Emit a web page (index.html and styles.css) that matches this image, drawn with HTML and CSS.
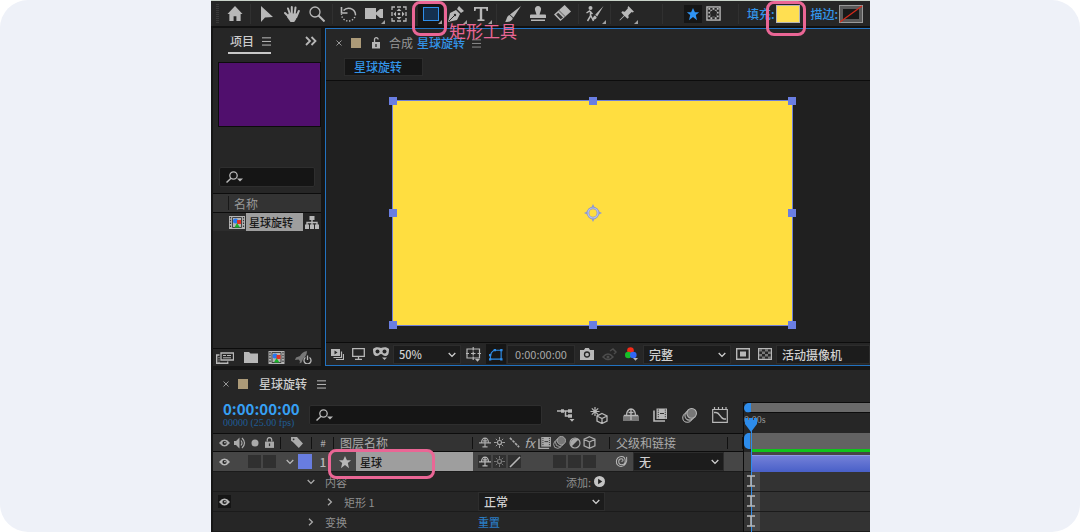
FILE: index.html
```html
<!DOCTYPE html>
<html lang="zh-CN">
<head>
    <meta charset="utf-8">
    <title>星球旋转</title>
    <link rel="stylesheet" href="styles.css">
</head>
<body>
    <svg class="sprite" aria-hidden="true">
        <symbol id="home" viewBox="0 0 16 16"><path d="M8 0 0 8.500h2V16h4.500v-5h3v5H14V8.500h2z" fill="currentColor"/></symbol>
        <symbol id="arrow" viewBox="0 0 12 16"><path d="M0 0v16l4-4.500 8-.5z" fill="currentColor"/></symbol>
        <symbol id="hand" viewBox="0 0 16 16"><path d="M1 7l4 4M4 2.500 6.300 9M7.800 1v8M11.500 1.500l-1 7.500M14.800 5l-2.500 6" stroke="currentColor" stroke-width="2" stroke-linecap="round" fill="none"/><path d="M4.500 7.500h8.700l-1 5.500-2 3H6.500L3 11z" fill="currentColor"/></symbol>
        <symbol id="zoom" viewBox="0 0 16 16"><circle cx="6" cy="6" r="5" fill="none" stroke="currentColor" stroke-width="1.300"/><path d="m9.500 9.500 6 6" stroke="currentColor" stroke-width="2"/></symbol>
        <symbol id="rotate" viewBox="0 0 16 16"><path d="M3 4.500A7 7 0 0 1 15 8" fill="none" stroke="currentColor" stroke-width="1.500"/><path d="M15 8A7 7 0 1 1 1 8" fill="none" stroke="currentColor" stroke-width="1.400" stroke-dasharray="1.400 1.600"/><path d="M1 1v6h6" fill="none" stroke="currentColor" stroke-width="1.600"/></symbol>
        <symbol id="camera" viewBox="0 0 18 16"><path d="M0 2h11v11H0zM11 6.500 15 3h3v9h-3l-4-3.500z" fill="currentColor"/></symbol>
        <symbol id="anchor" viewBox="0 0 16 16"><path d="M1 4V1h3M6 1h4M12 1h3v3M15 6v4M15 12v3h-3M10 15H6M4 15H1v-3M1 10V6" fill="none" stroke="currentColor" stroke-width="1.300"/><path d="M8 2.500 10.500 5h-5zM8 13.500 5.500 11h5zM2.500 8 5 5.500v5zM13.500 8 11 10.500v-5z" fill="currentColor"/><circle cx="8" cy="8" r="1.300" fill="currentColor"/></symbol>
        <symbol id="pen" viewBox="0 0 16 16"><path d="M0 16 2 7l6-3 4 4-3 6zM9 3l2-3 5 5-3 2z" fill="currentColor"/><path d="m1 15 5-5" stroke="#262626"/><circle cx="7" cy="9" r="1.200" fill="#262626"/></symbol>
        <symbol id="type" viewBox="0 0 16 16"><path d="M1 1h14v4h-1.500L13 2.800H9.200v10.400l2.300.4V15h-7v-1.400l2.300-.4V2.800H3L2.500 5H1z" fill="currentColor"/></symbol>
        <symbol id="brush" viewBox="0 0 16 16"><path d="M16 0 8.500 11.500 5 8.500zM4.500 9 7.800 12c-.3 3-3.800 4.300-7.800 3.800C2 14 1.500 10 4.500 9z" fill="currentColor"/></symbol>
        <symbol id="stamp" viewBox="0 0 16 16"><path d="M8 0a3.200 3.200 0 0 1 3 4L9.500 8.500H15a1 1 0 0 1 1 1V12H0V9.500a1 1 0 0 1 1-1h5.500L5 4a3.200 3.200 0 0 1 3-4zM1 13.500h14V15H1z" fill="currentColor"/></symbol>
        <symbol id="eraser" viewBox="0 0 16 16"><path d="M10 0 0 9l6 6L16 6z" fill="currentColor"/><path d="m4.500 5 6 6" stroke="#777" stroke-width="1"/><path d="M2 9 4 7.200l4.500 4.500L6.300 13.500z" fill="#333"/></symbol>
        <symbol id="roto" viewBox="0 0 18 16"><circle cx="5" cy="2" r="2" fill="currentColor"/><path d="M1 7l3-2 3 3M5 5v5l-3 5M5 9l3 6" fill="none" stroke="currentColor" stroke-width="1.500"/><path d="m18 0-6.300 10.500-2-1.800zM9.500 9.500l1.700 1.700C11 13 9 14 6.500 14c1-1 1-4 3-4.500z" fill="currentColor"/></symbol>
        <symbol id="pin" viewBox="0 0 16 16"><path d="m10 0 6 6-1.500.8-1-.3-3.500 3.300.3 2.700-1.300 1L6 10.700 1 15.500l-.5-.5L5.300 10 2.500 7l1-1.300 2.700.3L9.500 2.500 9.200 1.500z" fill="currentColor"/></symbol>
        <symbol id="star" viewBox="0 0 16 16"><path d="m8 1 2.200 5H15l-3.800 3.200L12.600 15 8 11.500 3.400 15l1.400-5.800L1 6h4.800z" fill="currentColor"/></symbol>
        <symbol id="checker" viewBox="0 0 16 16"><rect x="1" y="1" width="14" height="14" fill="none" stroke="currentColor" stroke-width="1.500"/><path d="M3.500 2v12M8 2v12M12.500 2v12" stroke="currentColor" stroke-width="2" stroke-dasharray="2 2"/><path d="M5.700 4v10M10.300 4v10" stroke="currentColor" stroke-width="2" stroke-dasharray="2 2"/><circle cx="8" cy="8" r="3.400" fill="#262626"/></symbol>
        <symbol id="menu" viewBox="0 0 10 10"><path d="M0 1.500h10M0 5.500h10M0 9.500h10" stroke="currentColor"/></symbol>
        <symbol id="more" viewBox="0 0 12 10"><path d="m1 1 4 4-4 4M6.500 1l4 4-4 4" fill="none" stroke="currentColor" stroke-width="1.800"/></symbol>
        <symbol id="close" viewBox="0 0 6 6"><path d="m.5.5 5 5m0-5-5 5" stroke="currentColor"/></symbol>
        <symbol id="unlock" viewBox="0 0 10 12"><path d="M1 5h8v6.500H1z" fill="currentColor"/><path d="M3.500 5V2.500a1.800 1.800 0 0 1 3.600 0" fill="none" stroke="currentColor" stroke-width="1.300"/><path d="M5 7v3" stroke="#262626" stroke-width="1.300"/></symbol>
        <symbol id="lock" viewBox="0 0 10 12"><path d="M0 5h10v7H0z" fill="currentColor"/><path d="M2.500 5V3a2.500 2.500 0 0 1 5 0v2" fill="none" stroke="currentColor" stroke-width="1.400"/><path d="M5 7v3" stroke="#333" stroke-width="1.400"/></symbol>
        <symbol id="search" viewBox="0 0 18 12"><circle cx="7.500" cy="4.500" r="3.700" fill="none" stroke="currentColor" stroke-width="1.300"/><path d="m5 7.200-4.500 4.300" stroke="currentColor" stroke-width="1.500"/><path d="M11 7.500h6l-3 3z" fill="currentColor"/></symbol>
        <symbol id="comp" viewBox="0 0 16 13"><path d="M0 0h16v13H0z" fill="#b4b4b4"/><path d="M1.500 1v11M14.500 1v11" stroke="#333" stroke-width="1.200" stroke-dasharray="1.500 1.300"/><path d="M3.500 1.500v10h9v-10z" fill="none" stroke="#444"/><circle cx="6.500" cy="5" r="2.500" fill="#2878f0"/><path d="M8 4h4v4H8z" fill="#e33222"/><path d="m8 7 3 4.500H5.500z" fill="#19b32b"/></symbol>
        <symbol id="net" viewBox="0 0 14 13"><path d="M4.500 0h5v4h-5zM0 8.500h4V13H0zM5 8.500h4V13H5zM10 8.500h4V13h-4z" fill="currentColor"/><path d="M7 4v5M2 9V6.500h10V9" fill="none" stroke="currentColor" stroke-width="1.400"/></symbol>
        <symbol id="interpret" viewBox="0 0 18 12"><path d="M5 1h12.500v7H5z" fill="none" stroke="currentColor" stroke-width="1.300"/><path d="M7 3.500h3M7 5.800h8M11 3.500h4" stroke="currentColor"/><path d="M3.500 3H.7v8.300h11V9.500" fill="none" stroke="currentColor" stroke-width="1.400"/><path d="M3 5v6" stroke="currentColor" stroke-dasharray="1.300 1"/></symbol>
        <symbol id="folder" viewBox="0 0 14 11"><path d="M0 0h5l1.500 1.500H14V11H0z" fill="currentColor"/></symbol>
        <symbol id="rocket" viewBox="0 0 17 13"><path d="M12 0C8 .5 6 3 5 5L1 6.500 0 9l3.500-.5L5 10l-.5 2.500 2-1L8 8c2-2 4-4 4-8z" fill="#777"/><path d="M10.500 6.500a3.500 3.500 0 1 0 4 0M12.500 4.500V9" fill="none" stroke="currentColor" stroke-width="1.300"/></symbol>
        <symbol id="preview" viewBox="0 0 13 11"><path d="M0 0h9v7H0z" fill="currentColor"/><path d="M2.500 8.500h8V2.500M5 10.500h7.500V5" fill="none" stroke="currentColor" stroke-width="1.200"/><path d="M3.500 1.500v4l3-2z" fill="#262626"/></symbol>
        <symbol id="monitor" viewBox="0 0 13 12"><path d="M.7.7h11.600v7.600H.7zM6.500 8v3M3 11.300h7" fill="none" stroke="currentColor" stroke-width="1.300"/></symbol>
        <symbol id="mask" viewBox="0 0 16 14"><path d="M0 2C2-.5 6 0 8 1c2-1 6-1.500 8 1 0 5-1 7-3.500 7C10 9 9.500 7 8 7S6 9 3.500 9C1 9 0 7 0 2z" fill="currentColor"/><circle cx="4.500" cy="4.500" r="2" fill="#262626"/><circle cx="11.500" cy="4.500" r="2" fill="#262626"/><path d="M9 10.500h5L11.500 13z" fill="currentColor"/></symbol>
        <symbol id="guides" viewBox="0 0 15 15"><path d="M1 2h12.500v9H1zM7.200 0v3.500M7.200 9.500V13M-1 6.500h4M11.500 6.500h4M5 6.500h4.500M7.200 4.500v4" fill="none" stroke="currentColor" stroke-width="1.200"/><path d="M9 12h5l-2.500 2.700z" fill="currentColor"/></symbol>
        <symbol id="path" viewBox="0 0 15 13"><path d="M1.500 11.500V7.500Q3 2 7 2h6v9.500z" fill="none" stroke="currentColor" stroke-width="1.200"/><path d="M0 10.500h2.500V13H0zM0 6h2.500v2.500H0zM12 .5h2.500V3H12zM12 10.500h2.500V13H12zM5 .5h2.500V3H5z" fill="currentColor"/></symbol>
        <symbol id="snap" viewBox="0 0 14 12"><path d="M0 2h4l1.200-2h3.600L10 2h4v10H0z" fill="currentColor"/><circle cx="7" cy="6.500" r="2.500" fill="none" stroke="#262626" stroke-width="1.300"/></symbol>
        <symbol id="ghost" viewBox="0 0 15 13"><path d="M1 9q5-6 10 0-5 5-10 0zM8 3l3-2 3 3-2 2" fill="none" stroke="currentColor" stroke-width="1.500"/><circle cx="6" cy="9" r="1.500" fill="currentColor"/></symbol>
        <symbol id="rgb" viewBox="0 0 14 14"><circle cx="5.500" cy="3.500" r="3.300" fill="#f52a18"/><circle cx="3.300" cy="8" r="3.300" fill="#17bd28"/><circle cx="8.300" cy="8" r="3.300" fill="#3267f5"/><path d="M8 11h5l-2.500 2.700z" fill="currentColor"/></symbol>
        <symbol id="roi" viewBox="0 0 14 12"><path d="M.7.7h12.600v10.600H.7z" fill="none" stroke="currentColor" stroke-width="1.400"/><path d="M4 3.500h6v5H4z" fill="currentColor"/></symbol>
        <symbol id="grid" viewBox="0 0 14 12"><path d="M.6.6h12.800v10.800H.6z" fill="none" stroke="currentColor" stroke-width="1.200"/><path d="M1 1h3v2.500H1zM7 1h3v2.500H7zM4 3.500h3V6H4zM10 3.500h3V6h-3zM1 6h3v2.500H1zM7 6h3v2.500H7zM4 8.500h3V11H4zM10 8.500h3V11h-3z" fill="#777"/></symbol>
        <symbol id="down" viewBox="0 0 8 6"><path d="m.7 1 3.300 3.400L7.300 1" fill="none" stroke="currentColor" stroke-width="1.300"/></symbol>
        <symbol id="right" viewBox="0 0 6 8"><path d="m1 .7 3.400 3.300L1 7.300" fill="none" stroke="currentColor" stroke-width="1.300"/></symbol>
        <symbol id="flow" viewBox="0 0 18 14"><path d="M0 3h6M6 3h5M8.500 3v5H12" fill="none" stroke="currentColor" stroke-width="1.500"/><path d="M4 1.300h3v3.400H4zM11 1.300h4v3.400h-4zM11 6.300h4v3.400h-4zM12.500 11h5L15 13.700z" fill="currentColor"/></symbol>
        <symbol id="draft" viewBox="0 0 18 17"><path d="M5 0v9M.5 4.500h9M1.800 1.300l6.400 6.400M8.200 1.300 1.800 7.700" stroke="currentColor" stroke-width="1.200"/><path d="m12 6.500 5 2.500v5l-5 2.500L7 14V9zM7 9l5 2.500L17 9M12 11.500v5" fill="none" stroke="currentColor" stroke-width="1.300"/></symbol>
        <symbol id="shybar" viewBox="0 0 16 14"><path d="M0 7.500h16V13H0z" fill="#777"/><path d="M3.500 7a4.500 6 0 0 1 9 0M8 1v11M1 7.500h14M5.500 4.500h5" fill="none" stroke="currentColor" stroke-width="1.400"/></symbol>
        <symbol id="shy" viewBox="0 0 14 12"><path d="M3 6a4 5 0 0 1 8 0M7 1v10M0 6.500h14M4 11h6M4.500 4h5" fill="none" stroke="currentColor" stroke-width="1.400"/></symbol>
        <symbol id="film" viewBox="0 0 14 13"><path d="M3.500 0H14v10.500H3.500z" fill="currentColor"/><path d="M1 2v10.500h11" fill="none" stroke="currentColor" stroke-width="1.600"/><path d="M5.300 1v9M12.300 1v9" stroke="#333" stroke-dasharray="1.200 1"/><path d="M7 5h4" stroke="#333"/></symbol>
        <symbol id="blur" viewBox="0 0 14 14"><circle cx="5" cy="9" r="4.300" fill="none" stroke="currentColor"/><circle cx="7" cy="7" r="4.300" fill="#333" stroke="currentColor"/><circle cx="9" cy="5" r="4.500" fill="#777" stroke="currentColor"/></symbol>
        <symbol id="graph" viewBox="0 0 16 16"><path d="M.7 2.500h14.600v12.800H.7zM2.500 0v3M6.500 0v3M10.500 0v3M14 0v3" fill="none" stroke="currentColor" stroke-width="1.200"/><path d="M2 5.500h2c4 0 4 6 8 6.500h2" fill="none" stroke="currentColor" stroke-width="1.400"/></symbol>
        <symbol id="eye" viewBox="0 0 12 8"><path d="M0 4q6-7.500 12 0-6 7.500-12 0z" fill="currentColor"/><circle cx="6" cy="4" r="2.300" fill="#222"/><circle cx="6.500" cy="3.500" r="1" fill="currentColor"/></symbol>
        <symbol id="sound" viewBox="0 0 12 12"><path d="M0 4h2l3.500-3.500v11L2 8H0z" fill="currentColor"/><path d="M7 3.500q2 2.500 0 5M8 1q5 5 0 10" fill="none" stroke="currentColor" stroke-width="1.200"/></symbol>
        <symbol id="dot" viewBox="0 0 8 8"><circle cx="4" cy="4" r="3.500" fill="currentColor"/></symbol>
        <symbol id="tag" viewBox="0 0 13 12"><path d="M0 0h6.500L13 7l-4.500 5L2 5.500 0 4z" fill="currentColor"/><circle cx="2.800" cy="2.500" r="1" fill="#333"/></symbol>
        <symbol id="sun" viewBox="0 0 12 12"><circle cx="6" cy="6" r="2.200" fill="none" stroke="currentColor" stroke-width="1.200"/><path d="M6 0v3M6 9v3M0 6h3M9 6h3M2 2l1.700 1.700M8.300 8.300 10 10M10 2 8.300 3.700M2 10l1.700-1.700" stroke="currentColor"/></symbol>
        <symbol id="jag" viewBox="0 0 12 12"><path d="m1 1 10 10" stroke="currentColor" stroke-width="1.800" stroke-dasharray="3 1"/></symbol>
        <symbol id="slash" viewBox="0 0 12 12"><path d="M1 11 11 1" stroke="currentColor" stroke-width="1.600"/></symbol>
        <symbol id="half" viewBox="0 0 12 12"><circle cx="6" cy="6" r="5" fill="none" stroke="currentColor" stroke-width="1.200"/><path d="M9.500 2.500a5 5 0 0 0-7 7z" fill="currentColor"/></symbol>
        <symbol id="cube" viewBox="0 0 12 12"><path d="m6 .7 5 2.300v6L6 11.300 1 9V3zM1 3l5 2.500L11 3M6 5.500v6" fill="none" stroke="currentColor" stroke-width="1.200"/></symbol>
        <symbol id="whip" viewBox="0 0 14 14"><path d="M12.500 2c1 6-2 10.500-6 10.500a5.200 5.200 0 0 1-5-5.500C1.500 4 4 1.500 7 1.500S11 4 11 6.500 9 10.500 7 10.500 4 9 4 7s1-3 3-3 2.500 2.500 0 3" fill="none" stroke="currentColor" stroke-width="1.100"/></symbol>
        <symbol id="play" viewBox="0 0 12 12"><circle cx="6" cy="6" r="6" fill="#c4c4c4"/><path d="M4.500 3v6L9 6z" fill="#222"/></symbol>
        <symbol id="target" viewBox="0 0 18 18"><path d="m9 0 2 4H7zM18 9l-4 2V7zM9 18l-2-4h4zM0 9l4-2v4z" fill="#8f9bd0"/><circle cx="9" cy="9" r="5" fill="none" stroke="#8f95b8" stroke-width="2.600"/><circle cx="9" cy="9" r="5" fill="none" stroke="#b4c0f4" stroke-width="1.200"/></symbol>
        <symbol id="ibeam" viewBox="0 0 8 12"><path d="M0 1h8M4 1v10M0 11h8" stroke="currentColor" stroke-width="1.600"/></symbol>
        <symbol id="head" viewBox="0 0 12 14"><path d="M0 0h3v2h1V0h4v2h1V0h3v6l-6 8-6-8z" fill="#2d8ceb"/></symbol>
    </svg>

    <div class="frame">
        <div class="app">
            <div class="toolbar">
                <span class="grip"></span>
                <div class="tools">
                    <button class="tool" aria-label="主页"><svg width="16" height="15"><use href="#home"/></svg></button>
                </div>
                <span class="sep"></span>
                <div class="tools">
                    <button class="tool" aria-label="选取"><svg width="12" height="16"><use href="#arrow"/></svg></button>
                    <button class="tool" aria-label="手形"><svg width="16" height="16"><use href="#hand"/></svg></button>
                    <button class="tool" aria-label="缩放"><svg width="16" height="16"><use href="#zoom"/></svg></button>
                </div>
                <span class="sep"></span>
                <div class="tools">
                    <button class="tool" aria-label="旋转"><svg width="17" height="16"><use href="#rotate"/></svg></button>
                    <button class="tool nested" aria-label="摄像机"><svg width="18" height="16"><use href="#camera"/></svg></button>
                    <button class="tool" aria-label="锚点"><svg width="16" height="16"><use href="#anchor"/></svg></button>
                </div>
                <span class="sep blank"></span>
                <div class="tools">
                    <div class="marked">
                        <button class="tool active nested" aria-label="矩形工具"><span class="rect"></span></button>
                        <span class="mark mark-tool"></span>
                        <span class="mark-text">矩形工具</span>
                    </div>
                    <button class="tool nested" aria-label="钢笔"><svg width="16" height="16"><use href="#pen"/></svg></button>
                    <button class="tool nested" aria-label="文字"><svg width="16" height="16"><use href="#type"/></svg></button>
                </div>
                <span class="sep"></span>
                <div class="tools">
                    <button class="tool" aria-label="画笔"><svg width="16" height="16"><use href="#brush"/></svg></button>
                    <button class="tool" aria-label="仿制图章"><svg width="16" height="16"><use href="#stamp"/></svg></button>
                    <button class="tool" aria-label="橡皮擦"><svg width="17" height="17"><use href="#eraser"/></svg></button>
                </div>
                <span class="sep"></span>
                <div class="tools">
                    <button class="tool nested" aria-label="Roto 笔刷"><svg width="19" height="16"><use href="#roto"/></svg></button>
                </div>
                <span class="sep"></span>
                <div class="tools">
                    <button class="tool nested" aria-label="操控点"><svg width="15" height="15"><use href="#pin"/></svg></button>
                </div>
                <span class="sep wide"></span>
                <div class="tools options">
                    <button class="small-tool on" aria-label="形状"><svg width="14" height="14"><use href="#star"/></svg></button>
                    <button class="small-tool" aria-label="蒙版"><svg width="15" height="15"><use href="#checker"/></svg></button>
                </div>
                <span class="sep"></span>
                <div class="paint">
                    <a href="#fill">填充:</a>
                    <div class="marked">
                        <button class="swatch yellow" aria-label="填充颜色"></button>
                        <span class="mark mark-fill"></span>
                    </div>
                </div>
                <div class="paint">
                    <a href="#stroke">描边:</a>
                    <button class="swatch none" aria-label="描边颜色"><svg width="24" height="18" viewBox="0 0 24 18"><path d="M1 17 23 1" stroke="#d42a1a" stroke-width="1.300"/></svg></button>
                </div>
            </div>

            <div class="middle">
                <div class="project">
                    <div class="project-tabs">
                        <div class="tab-active">项目 <svg width="9" height="10"><use href="#menu"/></svg></div>
                        <button class="plain" aria-label="更多"><svg width="12" height="10"><use href="#more"/></svg></button>
                    </div>
                    <div class="thumb"></div>
                    <div class="search project-search">
                        <svg width="18" height="12"><use href="#search"/></svg>
                        <input type="text" aria-label="搜索项目">
                    </div>
                    <table class="files">
                        <thead>
                            <tr><th colspan="2"><span>名称</span></th></tr>
                        </thead>
                        <tbody>
                            <tr>
                                <td><div class="file"><svg width="16" height="13"><use href="#comp"/></svg><span>星球旋转</span></div></td>
                                <td class="file-net"><svg width="14" height="13"><use href="#net"/></svg></td>
                            </tr>
                        </tbody>
                    </table>
                    <div class="project-foot">
                        <button class="plain" aria-label="解释素材"><svg width="18" height="12"><use href="#interpret"/></svg></button>
                        <button class="plain" aria-label="新建文件夹"><svg width="14" height="11"><use href="#folder"/></svg></button>
                        <button class="plain" aria-label="新建合成"><svg width="17" height="13"><use href="#comp"/></svg></button>
                        <button class="plain" aria-label="渲染"><svg width="17" height="13"><use href="#rocket"/></svg></button>
                    </div>
                </div>

                <div class="viewer">
                    <div class="viewer-tabs">
                        <button class="plain dim" aria-label="关闭"><svg width="6" height="6"><use href="#close"/></svg></button>
                        <span class="chip"></span>
                        <svg class="unlock" width="10" height="12"><use href="#unlock"/></svg>
                        <span class="dim">合成</span>
                        <a href="#comp-view">星球旋转</a>
                        <svg class="dim" width="9" height="10"><use href="#menu"/></svg>
                    </div>
                    <div class="crumbs"><a href="#comp-view">星球旋转</a></div>
                    <div class="stage" id="comp-view">
                        <div class="layer">
                            <i class="h tl"></i><i class="h tc"></i><i class="h tr"></i>
                            <i class="h ml"></i><i class="h mr"></i>
                            <i class="h bl"></i><i class="h bc"></i><i class="h br"></i>
                            <svg width="18" height="18"><use href="#target"/></svg>
                        </div>
                    </div>
                    <div class="viewer-foot">
                        <button class="plain" aria-label="预览"><svg width="13" height="11"><use href="#preview"/></svg></button>
                        <button class="plain" aria-label="显示器"><svg width="13" height="12"><use href="#monitor"/></svg></button>
                        <button class="plain" aria-label="VR"><svg width="16" height="14"><use href="#mask"/></svg></button>
                        <div class="pick pick-zoom">
                            <select aria-label="放大率"><option>50%</option></select>
                            <svg width="8" height="6"><use href="#down"/></svg>
                        </div>
                        <button class="plain" aria-label="网格"><svg width="15" height="15"><use href="#guides"/></svg></button>
                        <button class="plain path-on" aria-label="蒙版路径"><svg width="14" height="13"><use href="#path"/></svg></button>
                        <button class="time">0:00:00:00</button>
                        <button class="plain" aria-label="快照"><svg width="14" height="12"><use href="#snap"/></svg></button>
                        <button class="plain off" aria-label="显示快照"><svg width="15" height="13"><use href="#ghost"/></svg></button>
                        <button class="plain" aria-label="通道"><svg width="14" height="14"><use href="#rgb"/></svg></button>
                        <div class="pick pick-res">
                            <select aria-label="分辨率"><option>完整</option></select>
                            <svg width="8" height="6"><use href="#down"/></svg>
                        </div>
                        <button class="plain" aria-label="目标区域"><svg width="14" height="12"><use href="#roi"/></svg></button>
                        <button class="plain" aria-label="透明网格"><svg width="14" height="12"><use href="#grid"/></svg></button>
                        <div class="pick pick-cam">
                            <select aria-label="视图"><option>活动摄像机</option></select>
                        </div>
                    </div>
                </div>
            </div>

            <div class="timeline">
                <div class="timeline-tabs">
                    <button class="plain dim" aria-label="关闭"><svg width="6" height="6"><use href="#close"/></svg></button>
                    <span class="chip"></span>
                    <span>星球旋转</span>
                    <svg width="9" height="10"><use href="#menu"/></svg>
                </div>
                <div class="timeline-body">
                    <div class="layers">
                        <div class="layers-head">
                            <div class="clock">
                                <strong>0:00:00:00</strong>
                                <small>00000 (25.00 fps)</small>
                            </div>
                            <div class="search layer-search">
                                <svg width="18" height="12"><use href="#search"/></svg>
                                <input type="text" aria-label="搜索图层">
                            </div>
                            <div class="layer-tools">
                                <button class="plain" aria-label="流程图"><svg width="18" height="14"><use href="#flow"/></svg></button>
                                <button class="plain" aria-label="草图 3D"><svg width="18" height="17"><use href="#draft"/></svg></button>
                                <button class="plain" aria-label="隐藏"><svg width="16" height="14"><use href="#shybar"/></svg></button>
                                <button class="plain" aria-label="帧混合"><svg width="14" height="14"><use href="#film"/></svg></button>
                                <button class="plain" aria-label="运动模糊"><svg width="15" height="15"><use href="#blur"/></svg></button>
                                <button class="plain" aria-label="图表编辑器"><svg width="16" height="16"><use href="#graph"/></svg></button>
                            </div>
                        </div>
                        <table class="layer-table">
                            <colgroup><col class="c-av"><col class="c-label"><col class="c-num"><col><col class="c-switch"><col class="c-parent"></colgroup>
                            <thead>
                                <tr>
                                    <th><div class="cells"><svg width="11" height="8"><use href="#eye"/></svg><svg width="12" height="12"><use href="#sound"/></svg><svg width="8" height="8"><use href="#dot"/></svg><svg width="9" height="11"><use href="#lock"/></svg></div></th>
                                    <th class="center"><svg width="12" height="11"><use href="#tag"/></svg></th>
                                    <th class="center hash">#</th>
                                    <th class="th-text">图层名称</th>
                                    <th><div class="cells"><svg width="12" height="11"><use href="#shy"/></svg><svg width="11" height="11"><use href="#sun"/></svg><svg width="11" height="11"><use href="#jag"/></svg><em>fx</em><svg width="13" height="12"><use href="#film"/></svg><svg width="13" height="13"><use href="#blur"/></svg><svg width="12" height="12"><use href="#half"/></svg><svg width="13" height="13"><use href="#cube"/></svg></div></th>
                                    <th class="th-text"><div class="parent-th">父级和链接</div></th>
                                </tr>
                            </thead>
                            <tbody>
                                <tr class="selected">
                                    <td><div class="cells"><svg width="11" height="8"><use href="#eye"/></svg><b></b><i></i><i></i></div></td>
                                    <td><div class="label"><svg width="8" height="6"><use href="#down"/></svg><span></span></div></td>
                                    <td class="center number">1</td>
                                    <td>
                                        <div class="layer-name marked">
                                            <svg width="14" height="14"><use href="#star"/></svg><span>星球</span>
                                            <span class="mark mark-layer"></span>
                                        </div>
                                    </td>
                                    <td><div class="cells"><i><svg width="12" height="11"><use href="#shy"/></svg></i><i class="faint"><svg width="11" height="11"><use href="#sun"/></svg></i><i><svg width="12" height="12"><use href="#slash"/></svg></i><b></b><b></b><i></i><i></i><i></i></div></td>
                                    <td>
                                        <div class="parent">
                                            <svg width="13" height="13"><use href="#whip"/></svg>
                                            <div class="pick pick-parent"><select aria-label="父级"><option>无</option></select><svg width="8" height="6"><use href="#down"/></svg></div>
                                        </div>
                                    </td>
                                </tr>
                                <tr>
                                    <td></td>
                                    <td colspan="3"><div class="prop level-1"><svg width="8" height="6"><use href="#down"/></svg>内容</div></td>
                                    <td colspan="2"><div class="add">添加: <button class="plain" aria-label="添加"><svg width="11" height="11"><use href="#play"/></svg></button></div></td>
                                </tr>
                                <tr>
                                    <td><div class="cells"><i class="eye-on"><svg width="11" height="8"><use href="#eye"/></svg></i></div></td>
                                    <td colspan="3"><div class="prop level-2"><svg width="8" height="8"><use href="#right"/></svg>矩形 1</div></td>
                                    <td colspan="2"><div class="pick pick-mode"><select aria-label="混合模式"><option>正常</option></select><svg width="8" height="6"><use href="#down"/></svg></div></td>
                                </tr>
                                <tr>
                                    <td></td>
                                    <td colspan="3"><div class="prop level-1"><svg width="8" height="8"><use href="#right"/></svg>变换</div></td>
                                    <td colspan="2"><a class="reset" href="#reset">重置</a></td>
                                </tr>
                            </tbody>
                        </table>
                    </div>
                    <div class="tracks">
                        <div class="navigator"></div>
                        <div class="ruler">0:00s</div>
                        <div class="work-area"></div>
                        <div class="cached"></div>
                        <div class="track bar"></div>
                        <div class="track"><svg width="8" height="12"><use href="#ibeam"/></svg></div>
                        <div class="track"><svg width="8" height="12"><use href="#ibeam"/></svg></div>
                        <div class="track"><svg width="8" height="12"><use href="#ibeam"/></svg></div>
                        <div class="playhead"><svg width="12" height="14"><use href="#head"/></svg></div>
                    </div>
                </div>
            </div>
        </div>
    </div>
</body>
</html>
```

FILE: styles.css
```css
* {
    box-sizing: border-box;
}
body {
    margin: 0;
    background: #fff;
    color: #b8b8b8;
    font: 12px/16px "Noto Sans CJK SC", sans-serif;
}
svg {
    display: block;
    flex: none;
}
a {
    color: #3394e8;
    font-weight: 500;
    text-decoration: none;
}
button, input, select {
    font: inherit;
    color: inherit;
    border: 0;
    padding: 0;
    margin: 0;
    background: none;
}
.sprite {
    position: absolute;
    width: 0;
    height: 0;
}
.frame {
    min-height: 100vh;
    padding: 0 210px 0 211px;
    background: #eef1f8;
    border-radius: 28px;
}
.app {
    min-height: 100vh;
    background: #161616;
    overflow: hidden;
}
.plain {
    display: flex;
    align-items: center;
    justify-content: center;
}
.dim {
    color: #969696;
}
.off {
    color: #4c4c4c;
}
.faint {
    color: #7c7c7c;
}
.chip {
    width: 10px;
    height: 10px;
    background: #ac9a78;
}

/* toolbar */
.toolbar {
    display: flex;
    align-items: center;
    height: 28px;
    padding-left: 5px;
    background: #262626;
    border-top: 1px solid #c9d3c9;
    border-bottom: 2px solid #111;
}
.grip {
    width: 3px;
    height: 20px;
    margin-right: 3px;
    background: repeating-linear-gradient(#3a3a3a 0 1px, #262626 1px 2px);
}
.tools {
    display: flex;
    align-items: center;
}
.tool {
    position: relative;
    display: flex;
    align-items: center;
    justify-content: center;
    width: 25px;
    height: 24px;
}
.nested::after {
    content: "";
    position: absolute;
    right: 1px;
    bottom: 2px;
    border: 2px solid;
    border-color: transparent #a0a0a0 #a0a0a0 transparent;
}
.active {
    background: #151515;
}
.rect {
    width: 16px;
    height: 14px;
    background: #14304f;
    border: 1px solid #2f8eea;
}
.sep {
    width: 1px;
    height: 20px;
    margin: 0 3px;
    background: #303030;
}
.sep.blank {
    background: none;
}
.sep.wide {
    margin: 0 21px 0 23px;
}
.options {
    gap: 2px;
    margin-right: 13px;
}
.small-tool {
    display: flex;
    align-items: center;
    justify-content: center;
    width: 18px;
    height: 18px;
}
.small-tool.on {
    color: #2f94f5;
    background: #151515;
}
.paint {
    display: flex;
    align-items: center;
    gap: 1px;
    margin: 0 6px 0 5px;
}
.swatch {
    display: block;
    width: 24px;
    height: 18px;
    border: 1px solid #b5b5b5;
}
.yellow {
    background: #ffdf51;
}
.swatch.none {
    border: 0;
    background: #181818;
    box-shadow: inset 0 0 0 1px #999, inset 0 0 0 4px #5a5a5a;
}

/* pink annotations lie over the interface */
.marked {
    position: relative;
}
.mark {
    position: absolute;
    z-index: 2;
    border: 3px solid #ea6695;
    border-radius: 8px;
    pointer-events: none;
}
.mark-tool {
    left: -6px;
    top: -1px;
    width: 35px;
    height: 35px;
}
.mark-fill {
    left: -10px;
    top: -4px;
    width: 40px;
    height: 35px;
}
.mark-layer {
    left: -6px;
    top: -3px;
    width: 107px;
    height: 30px;
}
.mark-text {
    position: absolute;
    z-index: 2;
    left: 31px;
    top: 17px;
    color: #ea6695;
    font-size: 17px;
    line-height: 24px;
    white-space: nowrap;
}

/* project panel */
.middle {
    display: flex;
    height: 338px;
    padding-left: 2px;
}
.project {
    display: flex;
    flex-direction: column;
    flex: none;
    width: 108px;
    margin-right: 4px;
    background: #262626;
}
.project-tabs {
    display: flex;
    align-items: flex-start;
    justify-content: space-between;
    height: 28px;
    padding: 0 4px 0 15px;
}
.project-tabs .plain {
    height: 26px;
}
.tab-active {
    display: flex;
    align-items: center;
    gap: 8px;
    height: 26px;
    padding: 2px 0 0 2px;
    border-bottom: 2px solid #c8c8c8;
    color: #ccc;
    font-weight: 500;
}
.thumb {
    height: 65px;
    margin: 6px 0 0 5px;
    background: #500f6d;
    border: 1px solid #0c0c0c;
}
.search {
    display: flex;
    align-items: center;
    height: 20px;
    padding-left: 6px;
    background: #151515;
    border: 1px solid #2e2e2e;
    border-radius: 2px;
}
.search input {
    flex: 1;
    min-width: 0;
    outline: 0;
}
.project-search {
    margin: 40px 6px 0;
}
.files {
    width: 100%;
    margin: 6px 0 auto;
    border-spacing: 0;
    color: #999;
}
.files th {
    height: 20px;
    padding: 0 0 0 15px;
    background: #333;
    border-top: 1px solid #0c0c0c;
    border-bottom: 1px solid #0c0c0c;
    font-weight: normal;
    text-align: left;
}
.files th span {
    display: block;
    height: 14px;
    line-height: 15px;
    padding-left: 5px;
    border-left: 1px solid #181818;
}
.files td {
    height: 18px;
    padding: 0;
    background: #2d2d2d;
}
.file {
    display: flex;
    align-items: center;
    padding-left: 16px;
}
.file span {
    flex: 1;
    height: 18px;
    margin-left: 1px;
    padding-left: 3px;
    line-height: 18px;
    font-size: 11px;
    background: #9e9e9e;
    color: #191919;
    font-weight: 500;
}
.files .file-net {
    width: 18px;
    padding-left: 2px;
    background: #262626;
    color: #b8b8b8;
}
.project-foot {
    display: flex;
    align-items: center;
    gap: 10px;
    height: 18px;
    padding-left: 3px;
    border-top: 1px solid #0c0c0c;
}

/* composition viewer */
.viewer {
    flex: 1;
    min-width: 0;
    display: flex;
    flex-direction: column;
    background: #262626;
    border: 1px solid #2272c0;
    border-right: 0;
}
.viewer-tabs {
    display: flex;
    align-items: center;
    gap: 4px;
    height: 27px;
    padding-left: 10px;
}
.viewer-tabs .chip {
    margin-left: 5px;
}
.viewer-tabs a {
    margin-right: 3px;
}
.unlock {
    margin: 0 4px 0 6px;
}
.crumbs {
    height: 25px;
    padding: 2px 18px 4px;
    border-bottom: 1px solid #0c0c0c;
}
.crumbs a {
    display: block;
    width: 79px;
    height: 18px;
    padding-left: 9px;
    line-height: 16px;
    background: #161616;
    border: 1px solid #2c2c2c;
}
.stage {
    flex: 1;
    padding: 19px 77px 0 66px;
    background: #202020;
}
.layer {
    position: relative;
    display: flex;
    align-items: center;
    justify-content: center;
    aspect-ratio: 16 / 9;
    background: #ffde40;
    border: 1px solid #6f7fd8;
}
.h {
    position: absolute;
    width: 8px;
    height: 8px;
    margin: -4px;
    background: #6a7ee2;
}
.tl, .ml, .bl {
    left: 0;
}
.tc, .bc {
    left: 50%;
}
.tr, .mr, .br {
    left: 100%;
}
.tl, .tc, .tr {
    top: 0;
}
.ml, .mr {
    top: 50%;
}
.bl, .bc, .br {
    top: 100%;
}
.viewer-foot {
    display: flex;
    align-items: center;
    gap: 8px;
    height: 23px;
    padding-left: 5px;
    border-top: 1px solid #0c0c0c;
}
.pick {
    position: relative;
    height: 19px;
    background: #1c1c1c;
    border: 1px solid #2d2d2d;
    color: #d0d0d0;
}
.pick select {
    display: block;
    appearance: none;
    width: 100%;
    height: 17px;
    padding-left: 5px;
    line-height: 17px;
    font-weight: 500;
    outline: 0;
}
.pick svg {
    position: absolute;
    right: 4px;
    top: 6px;
    pointer-events: none;
}
.pick-zoom {
    width: 68px;
    margin: 0 -3px 0 -4px;
}
.pick-zoom select {
    font-size: 11px;
}
.path-on {
    width: 20px;
    height: 20px;
    margin: 0 -7px 0 -3px;
    background: #161616;
    color: #2f8eea;
}
.time {
    width: 68px;
    height: 19px;
    margin-right: -3px;
    background: #1e1e1e;
    border: 1px solid #2d2d2d;
    font-size: 11px;
    line-height: 16px;
    color: #a8a8a8;
}
.pick-res {
    width: 88px;
    margin: 0 -3px 0 -4px;
}
.pick-cam {
    flex: 1;
    margin-left: -4px;
}

/* timeline */
.timeline {
    margin: 4px 0 0 2px;
    background: #262626;
}
.timeline-tabs {
    display: flex;
    align-items: center;
    height: 27px;
    padding-left: 10px;
    gap: 10px;
    color: #ccc;
    font-weight: 500;
}
.timeline-tabs .chip {
    margin: 0 1px 0 -1px;
}
.timeline-body {
    display: grid;
    grid-template-columns: 530px 1fr;
}
.layers-head {
    display: flex;
    align-items: center;
    height: 36px;
    padding-left: 10px;
}
.clock {
    width: 86px;
    white-space: nowrap;
}
.clock strong {
    display: block;
    font-size: 15px;
    line-height: 16px;
    color: #36a0f4;
}
.clock small {
    display: block;
    font: 10px/12px "Liberation Serif", serif;
    color: #1f5d96;
}
.layer-search {
    flex: 1;
}
.layer-tools {
    display: flex;
    align-items: center;
    justify-content: space-between;
    width: 171px;
    margin: 0 15px;
}
.layer-table {
    width: 100%;
    table-layout: fixed;
    border-spacing: 0;
}
.c-av {
    width: 68px;
}
.c-label {
    width: 31px;
}
.c-num {
    width: 22px;
}
.c-switch {
    width: 137px;
}
.c-parent {
    width: 133px;
}
.layer-table th {
    height: 19px;
    padding: 0;
    font-weight: normal;
    text-align: left;
    color: #aaa;
    background: linear-gradient(#111, #111) right center / 1px 12px no-repeat #333;
    border-top: 1px solid #0c0c0c;
    border-bottom: 1px solid #0c0c0c;
}
.layer-table td {
    height: 20px;
    padding: 0;
    border-bottom: 1px solid #1b1b1b;
}
.layer-table .th-text {
    padding-left: 6px;
}
.parent-th {
    width: 112px;
    height: 12px;
    line-height: 12px;
    border-right: 1px solid #111;
}
.layer-table .center {
    text-align: center;
}
.center svg {
    margin: 0 auto;
}
.layer-table .hash {
    font-size: 10px;
}
.cells {
    display: grid;
    grid-auto-flow: column;
    grid-auto-columns: 13px;
    gap: 2px;
    align-items: center;
    justify-items: center;
    padding-left: 5px;
    line-height: 13px;
}
.cells i {
    display: flex;
    align-items: center;
    justify-content: center;
    width: 13px;
    height: 13px;
    background: #303030;
}
.cells em {
    font-size: 13px;
}
.cells i.eye-on {
    background: #151515;
}
.selected {
    background: #464646;
}
.label {
    display: flex;
    align-items: center;
    gap: 4px;
    padding-left: 5px;
}
.label span {
    width: 14px;
    height: 15px;
    background: #687de0;
}
.number {
    font-weight: 500;
}
.layer-name {
    display: flex;
    align-items: center;
    height: 19px;
    padding-left: 4px;
}
.layer-name span:not(.mark) {
    flex: 1;
    height: 19px;
    margin-left: 4px;
    padding-left: 4px;
    font-size: 11px;
    line-height: 20px;
    font-weight: 500;
    background: #9e9e9e;
    color: #191919;
}
.parent {
    display: flex;
    align-items: center;
    gap: 5px;
    padding-left: 5px;
}
.pick-parent {
    width: 91px;
}
.pick-mode {
    width: 127px;
    margin-left: 5px;
}
.prop {
    display: flex;
    align-items: center;
    gap: 10px;
    font-size: 11px;
    color: #8f8f8f;
}
.prop svg {
    color: #aaa;
}
.level-1 {
    padding-left: 26px;
}
.level-2 {
    padding-left: 45px;
}
.add {
    display: flex;
    align-items: center;
    gap: 3px;
    padding-left: 93px;
    font-size: 11px;
    color: #8f8f8f;
}
.reset {
    margin-left: 5px;
    font-size: 11px;
    color: #2a7bc0;
}

/* tracks */
.tracks {
    position: relative;
    margin-top: 5px;
    border-left: 1px solid #0c0c0c;
    border-top: 1px solid #0c0c0c;
}
.navigator {
    height: 10px;
    background: #6a6a6a;
    border-bottom: 1px solid #0c0c0c;
    border-left: 7px solid #2d8ceb;
    border-radius: 5px 0 0 5px;
}
.ruler {
    height: 20px;
    font: 10px/14px "Liberation Serif", serif;
    color: #999;
}
.work-area {
    height: 16px;
    background: #626262;
    border-left: 6px solid #2d8ceb;
    border-radius: 5px 0 0 5px;
}
.cached {
    height: 3px;
    margin-left: 7px;
    background: #0fc41c;
}
.track {
    height: 20px;
    padding: 3px 0 0 3px;
    border-bottom: 1px solid #1b1b1b;
    background: linear-gradient(90deg, #333 7px, #484848 7px 16px, #333 16px);
}
.track svg {
    position: relative;
    z-index: 1;
}
.track.bar {
    padding: 3px 0 0 7px;
    background: #464646;
}
.bar::after {
    content: "";
    display: block;
    height: 16px;
    background: linear-gradient(#7380d8, #4960c8);
    border-top: 1px solid #8f9be6;
}
.playhead {
    position: absolute;
    left: 1px;
    top: 15px;
    bottom: 0;
    width: 12px;
    background: linear-gradient(#2d8ceb, #2d8ceb) 6px 0 / 1px 100% no-repeat;
}
```
